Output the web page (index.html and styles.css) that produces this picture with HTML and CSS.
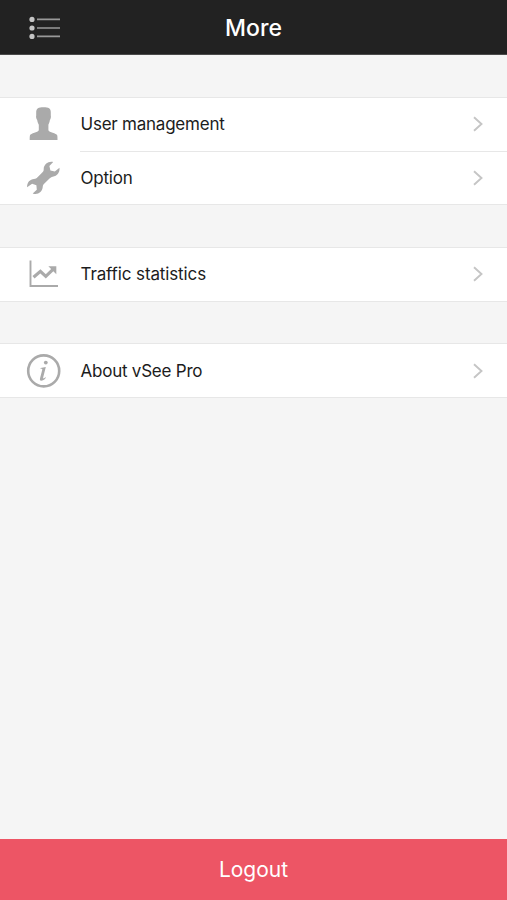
FILE: index.html
```html
<!DOCTYPE html>
<html lang="en">
<head>
<meta charset="utf-8">
<title>More</title>
<link rel="stylesheet" href="styles.css">
</head>
<body>
<header class="bar">
  <svg class="menu" viewBox="0 0 32 24"><g fill="#c4c4c4"><circle cx="3" cy="3.4" r="2.6"/><circle cx="3" cy="12" r="2.6"/><circle cx="3" cy="20.4" r="2.6"/></g><path d="M8 3.4H31M8 12H31M8 20.4H31" stroke="#999" stroke-width="1.6"/></svg>
  <h1 class="title">More</h1>
</header>
<main class="content">
  <section class="group">
    <a class="row">
      <svg class="icon" viewBox="0 0 36 36"><path fill="#aaa" d="M17.5 1.2C22.5 1.2 25 2.4 24.8 6.5V9.5C25.2 10.5 24.8 13 23.9 14C23.6 16.2 22.9 17.5 22.4 18.7V24.2C23 26.5 30.5 27 31.2 29.3C31.5 30.5 31.5 32 31.5 34H3.7C3.7 32 3.7 30.5 4 29.3C4.7 27 12 26.5 12.8 24.2V18.7C12.2 17.5 11.5 16.2 11.2 14C10.2 13 9.8 10.5 10.2 9.5V6.5C10 2.4 12.6 1.2 17.5 1.2Z"/></svg>
      <span class="label">User management</span>
      <svg class="chevron" viewBox="0 0 12 18"><path d="M2 2.2L9.5 9L2 15.8"/></svg>
    </a>
    <a class="row">
      <svg class="icon" viewBox="0 0 36 36"><path fill="#aaa" d="M27.2 2C22.5 .9 17.7 4.2 17.7 9.2C17.7 11 17.2 11.6 16 12.8L11.5 17.3C10.4 18.4 9.8 18.8 8 18.9C4.1 19 .9 22.3 1.1 27.2L6.1 23.8L10.4 25.2L10.8 29.8L6.7 33.5C11.7 35.4 16.4 31.7 16.7 27.3C16.8 25.5 17.3 24.7 18.4 23.6L23.5 18.5C24.5 17.5 25.3 17 26.7 16.7C31.3 16 34 12.1 33.5 7.7L28.8 11.6L24.4 10.6L23.4 6Z"/></svg>
      <span class="label">Option</span>
      <svg class="chevron" viewBox="0 0 12 18"><path d="M2 2.2L9.5 9L2 15.8"/></svg>
    </a>
  </section>
  <section class="group">
    <a class="row">
      <svg class="icon" viewBox="0 0 36 36"><path fill="none" stroke="#aaa" stroke-width="1.9" d="M4.5 4.5V30H32"/><path fill="none" stroke="#aaa" stroke-width="3.2" d="M7.5 21.2L14.4 15.3L19.8 20.4L27.3 13.2"/><path fill="#aaa" d="M22.4 10.2H30.3V18.2Z"/></svg>
      <span class="label label-traffic">Traffic statistics</span>
      <svg class="chevron" viewBox="0 0 12 18"><path d="M2 2.2L9.5 9L2 15.8"/></svg>
    </a>
  </section>
  <section class="group group-about">
    <a class="row">
      <svg class="icon" viewBox="0 0 36 36"><circle cx="17.7" cy="17.9" r="15.5" fill="none" stroke="#aaa" stroke-width="2.6"/><circle cx="19.8" cy="9.6" r="1.9" fill="#aaa"/><path fill="#aaa" d="M14.6 14.9L19.8 13.9L17.1 24.7C16.9 25.7 17.6 25.7 19.4 24.2L19.9 24.8C18.2 27 16.6 27.8 15.2 27.8C13.9 27.8 13.7 26.7 14.1 25.1L16.2 17C16.5 15.9 16.2 15.7 14.5 15.8Z"/></svg>
      <span class="label">About vSee Pro</span>
      <svg class="chevron" viewBox="0 0 12 18"><path d="M2 2.2L9.5 9L2 15.8"/></svg>
    </a>
  </section>
</main>
<button class="logout">Logout</button>
</body>
</html>
```
FILE: styles.css
```css
* { box-sizing: border-box; }
body {
  margin: 0;
  height: 900px;
  display: flex;
  flex-direction: column;
  background: #f5f5f5;
  color: #1c1c1c;
  font-family: Inter, "Liberation Sans", sans-serif;
}
.bar {
  height: 55px;
  flex: none;
  display: grid;
  grid-template-columns: 80px 1fr 80px;
  align-items: center;
  background: #222;
  border-bottom: 1px solid #4a4a4a;
}
.menu { width: 32px; height: 24px; margin-left: 29px; margin-top: 1px; }
.title {
  margin: 2px 0 0;
  text-align: center;
  color: #fff;
  font-size: 23px;
  line-height: 30px;
  font-weight: 500;
}
.content {
  flex: 1;
  display: flex;
  flex-direction: column;
  gap: 42px;
  padding-top: 42px;
}
.group {
  background: #fff;
  border-top: 1px solid #e7e7e7;
  border-bottom: 1px solid #e7e7e7;
}
.row {
  height: 53px;
  display: grid;
  grid-template-columns: 36px 1fr 12px;
  column-gap: 18.5px;
  align-items: center;
  padding: 0 23.5px 1px 26px;
}
.row + .row {
  padding-top: 1px;
  padding-bottom: 0;
  background: linear-gradient(#e7e7e7, #e7e7e7) 80px 0 / 100% 1px no-repeat;
}
.group-about { margin-top: -1px; }
.group-about .row { padding-bottom: 0; }
.icon { width: 36px; height: 36px; }
.label { font-size: 17px; line-height: 22px; letter-spacing: -.23px; white-space: nowrap; }
.label-traffic { letter-spacing: -.12px; }
.chevron { width: 12px; height: 18px; fill: none; stroke: #c5c5c5; stroke-width: 1.9; }
.logout {
  height: 61px;
  flex: none;
  border: 0;
  padding: 1px 0 0;
  background: #ed5565;
  color: #fff;
  font: 400 21px/28px Inter, "Liberation Sans", sans-serif;
}
```
